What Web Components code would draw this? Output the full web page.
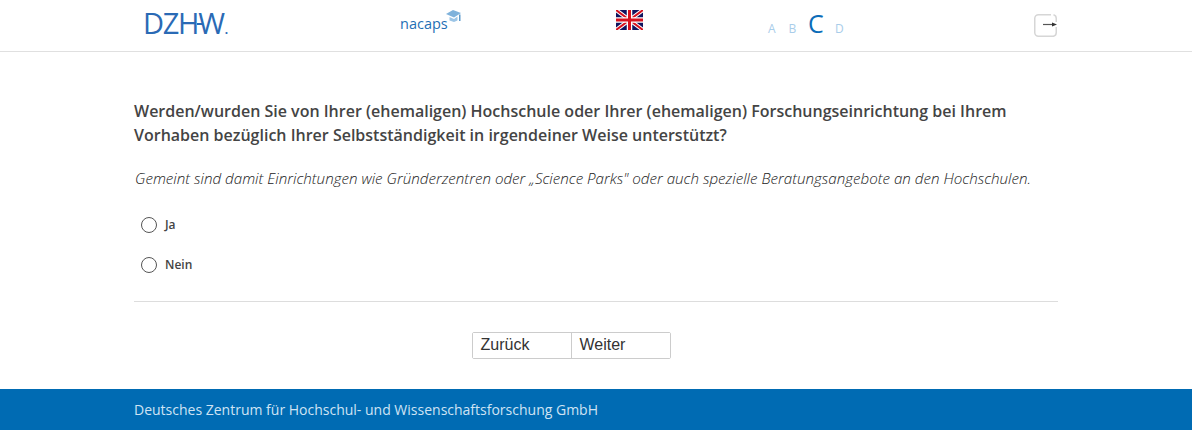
<!DOCTYPE html>
<html>
  <head>
    <meta charset="utf-8">
    <title>nacaps</title>
    <style>
      html, body { margin: 0; background: #fff; }
      body { font-family: "Open Sans", sans-serif; color: #444; }
    </style>
  </head>
  <body>
    <survey-header></survey-header>
    <survey-page>
      <span slot="question">Werden/wurden Sie von Ihrer (ehemaligen) Hochschule oder Ihrer (ehemaligen) Forschungseinrichtung bei Ihrem Vorhaben bezüglich Ihrer Selbstständigkeit in irgendeiner Weise unterstützt?</span>
      <span slot="hint">Gemeint sind damit Einrichtungen wie Gründerzentren oder „Science Parks" oder auch spezielle Beratungsangebote an den Hochschulen.</span>
      <survey-radio name="q" slot="options">Ja</survey-radio>
      <survey-radio name="q" slot="options">Nein</survey-radio>
      <survey-nav slot="nav"></survey-nav>
    </survey-page>
    <survey-footer>Deutsches Zentrum für Hochschul- und Wissenschaftsforschung GmbH</survey-footer>

    <template id="header-template">
      <style>
        :host { display: block; height: 51px; border-bottom: 1px solid #e0e0e0; }
        .bar {
          width: 924px; height: 51px; margin: 0 auto;
          display: grid; grid-template-columns: 266px 216px 152px 266px 24px;
          align-items: start;
        }
        .dzhw {
          margin: 5px 0 0 9px; font: 400 29px/36px "Open Sans", sans-serif;
          letter-spacing: -1.3px; color: #2a6ab5; white-space: nowrap;
        }
        .dzhw b { position: relative; font-weight: 400; }
        /* the crossbar of the H runs on into the W */
        .dzhw b::before { content: ""; position: absolute; left: -1px; top: 20px; width: 6px; height: 2px; background: #2a6ab5; }
        .dzhw i { font-style: normal; font-size: 14px; font-weight: 600; letter-spacing: 0; margin-left: 1px; }
        .nacaps { display: flex; margin-top: 12px; color: #1f6fb5; font: 400 14.5px/24px "Open Sans", sans-serif; }
        .nacaps svg { margin: -2px 0 0 -2px; }
        .flag { display: block; margin-top: 10px; }
        .tracks { display: flex; align-items: baseline; margin-top: 8px; color: #a9cdea; font-size: 12px; line-height: 30px; }
        .tracks span { width: 20.5px; }
        .tracks .on { color: #0b6cb8; font-size: 25px; width: 27px; margin-left: -1px; }
        .exit { display: block; margin-top: 14px; }
      </style>
      <div class="bar">
        <div class="dzhw">DZH<b>W</b><i>.</i></div>
        <div class="nacaps">nacaps
          <svg width="15" height="14" viewBox="0 0 15 14">
            <path d="M0 4 7 0 15 3 8 7.500Z" fill="#7fb2db"/>
            <path d="M3.500 7 8 9 11.500 6.500V10.500L8 12 3.500 10.500Z" fill="#9cc5e6"/>
            <path d="M13 4.500H14.500V11H13Z" fill="#5f9ccd"/>
          </svg>
        </div>
        <svg class="flag" width="27" height="20" viewBox="0 0 27 20">
          <rect width="27" height="20" fill="#10145f"/>
          <path d="M0 0 27 20M27 0 0 20" stroke="#fff" stroke-width="4"/>
          <path d="M0 0 27 20M27 0 0 20" stroke="#d6121f" stroke-width="2"/>
          <path d="M13.500 0V20M0 10H27" stroke="#fff" stroke-width="5.500"/>
          <path d="M13.500 0V20M0 10H27" stroke="#d6121f" stroke-width="3"/>
        </svg>
        <div class="tracks"><span>A</span><span>B</span><span class="on">C</span><span>D</span></div>
        <svg class="exit" width="24" height="23" viewBox="0 0 24 23">
          <path d="M17 .750H4.500A3.750 3.750 0 0 0 .750 4.500V18.500A3.750 3.750 0 0 0 4.500 22.250H19.500A3.750 3.750 0 0 0 22.250 18.500V13M22.250 8V4.500A3.750 3.750 0 0 0 19.500 .750" fill="none" stroke="#d6d6d6" stroke-width="1.500"/>
          <path d="M9 10.500H19" stroke="#555" stroke-width="1.200"/>
          <path d="M18 8.500 23 10.500 18 12.500Z" fill="#333"/>
        </svg>
      </div>
    </template>

    <template id="page-template">
      <style>
        :host { display: block; width: 924px; height: 337px; margin: 0 auto; box-sizing: border-box; padding-top: 47px; }
        .question { font-size: 16px; font-weight: 600; line-height: 24px; color: #444; }
        .hint { margin-top: 21px; padding-left: 1px; font-size: 15.17px; font-weight: 300; font-style: italic; line-height: 20px; color: #222; }
        .options { display: flex; flex-direction: column; margin: 17px 0 0 7px; }
        hr { margin: 16px 0 0; border: 0; border-top: 1px solid #ddd; }
        .nav { display: flex; justify-content: center; margin-top: 30px; padding-right: 50px; }
      </style>
      <div class="question"><slot name="question"></slot></div>
      <div class="hint"><slot name="hint"></slot></div>
      <div class="options"><slot name="options"></slot></div>
      <hr>
      <div class="nav"><slot name="nav"></slot></div>
    </template>

    <template id="radio-template">
      <style>
        :host { display: block; height: 40px; }
        label { display: flex; align-items: center; height: 40px; font-size: 12px; font-weight: 600; color: #444; }
        input {
          appearance: none; box-sizing: border-box; width: 16px; height: 16px; margin: 0 8px 0 0;
          border: 1px solid #555; border-radius: 50%; background: #fff;
        }
        input:checked { background: #0b6cb8; box-shadow: inset 0 0 0 3px #fff; }
        span { margin-bottom: 2px; }
      </style>
      <label><input type="radio"><span><slot></slot></span></label>
    </template>

    <template id="nav-template">
      <style>
        :host { display: inline-flex; }
        .group { display: flex; border: 1px solid #ccc; border-radius: 2px; }
        button {
          box-sizing: border-box; width: 98px; height: 25px; padding: 0 0 2px 8px; border: 0; background: #fff;
          font: 16px "Liberation Sans", sans-serif; color: #333; text-align: left;
        }
        button + button { border-left: 1px solid #ccc; width: 99px; padding-left: 8px; }
      </style>
      <div class="group"><button>Zurück</button><button>Weiter</button></div>
    </template>

    <template id="footer-template">
      <style>
        :host { display: block; background: #006bb3; height: 41px; }
        div { width: 924px; margin: 0 auto; font-size: 14px; line-height: 41px; color: #cfe3f3; }
      </style>
      <div><slot></slot></div>
    </template>

    <script>
    function define(name, templateId) {
      customElements.define(name,
        class extends HTMLElement {
          constructor() {
            super();
            var template = document.getElementById(templateId).content;
            this.attachShadow({mode: 'open'}).appendChild(template.cloneNode(true));
          }
        });
    }
    define('survey-header', 'header-template');
    define('survey-page', 'page-template');
    define('survey-nav', 'nav-template');
    define('survey-footer', 'footer-template');

    customElements.define('survey-radio',
      class extends HTMLElement {
        constructor() {
          super();
          var template = document.getElementById('radio-template').content;
          this.attachShadow({mode: 'open'}).appendChild(template.cloneNode(true));
          this.shadowRoot.querySelector('input').name = this.getAttribute('name');
        }
      });
    </script>
  </body>
</html>
